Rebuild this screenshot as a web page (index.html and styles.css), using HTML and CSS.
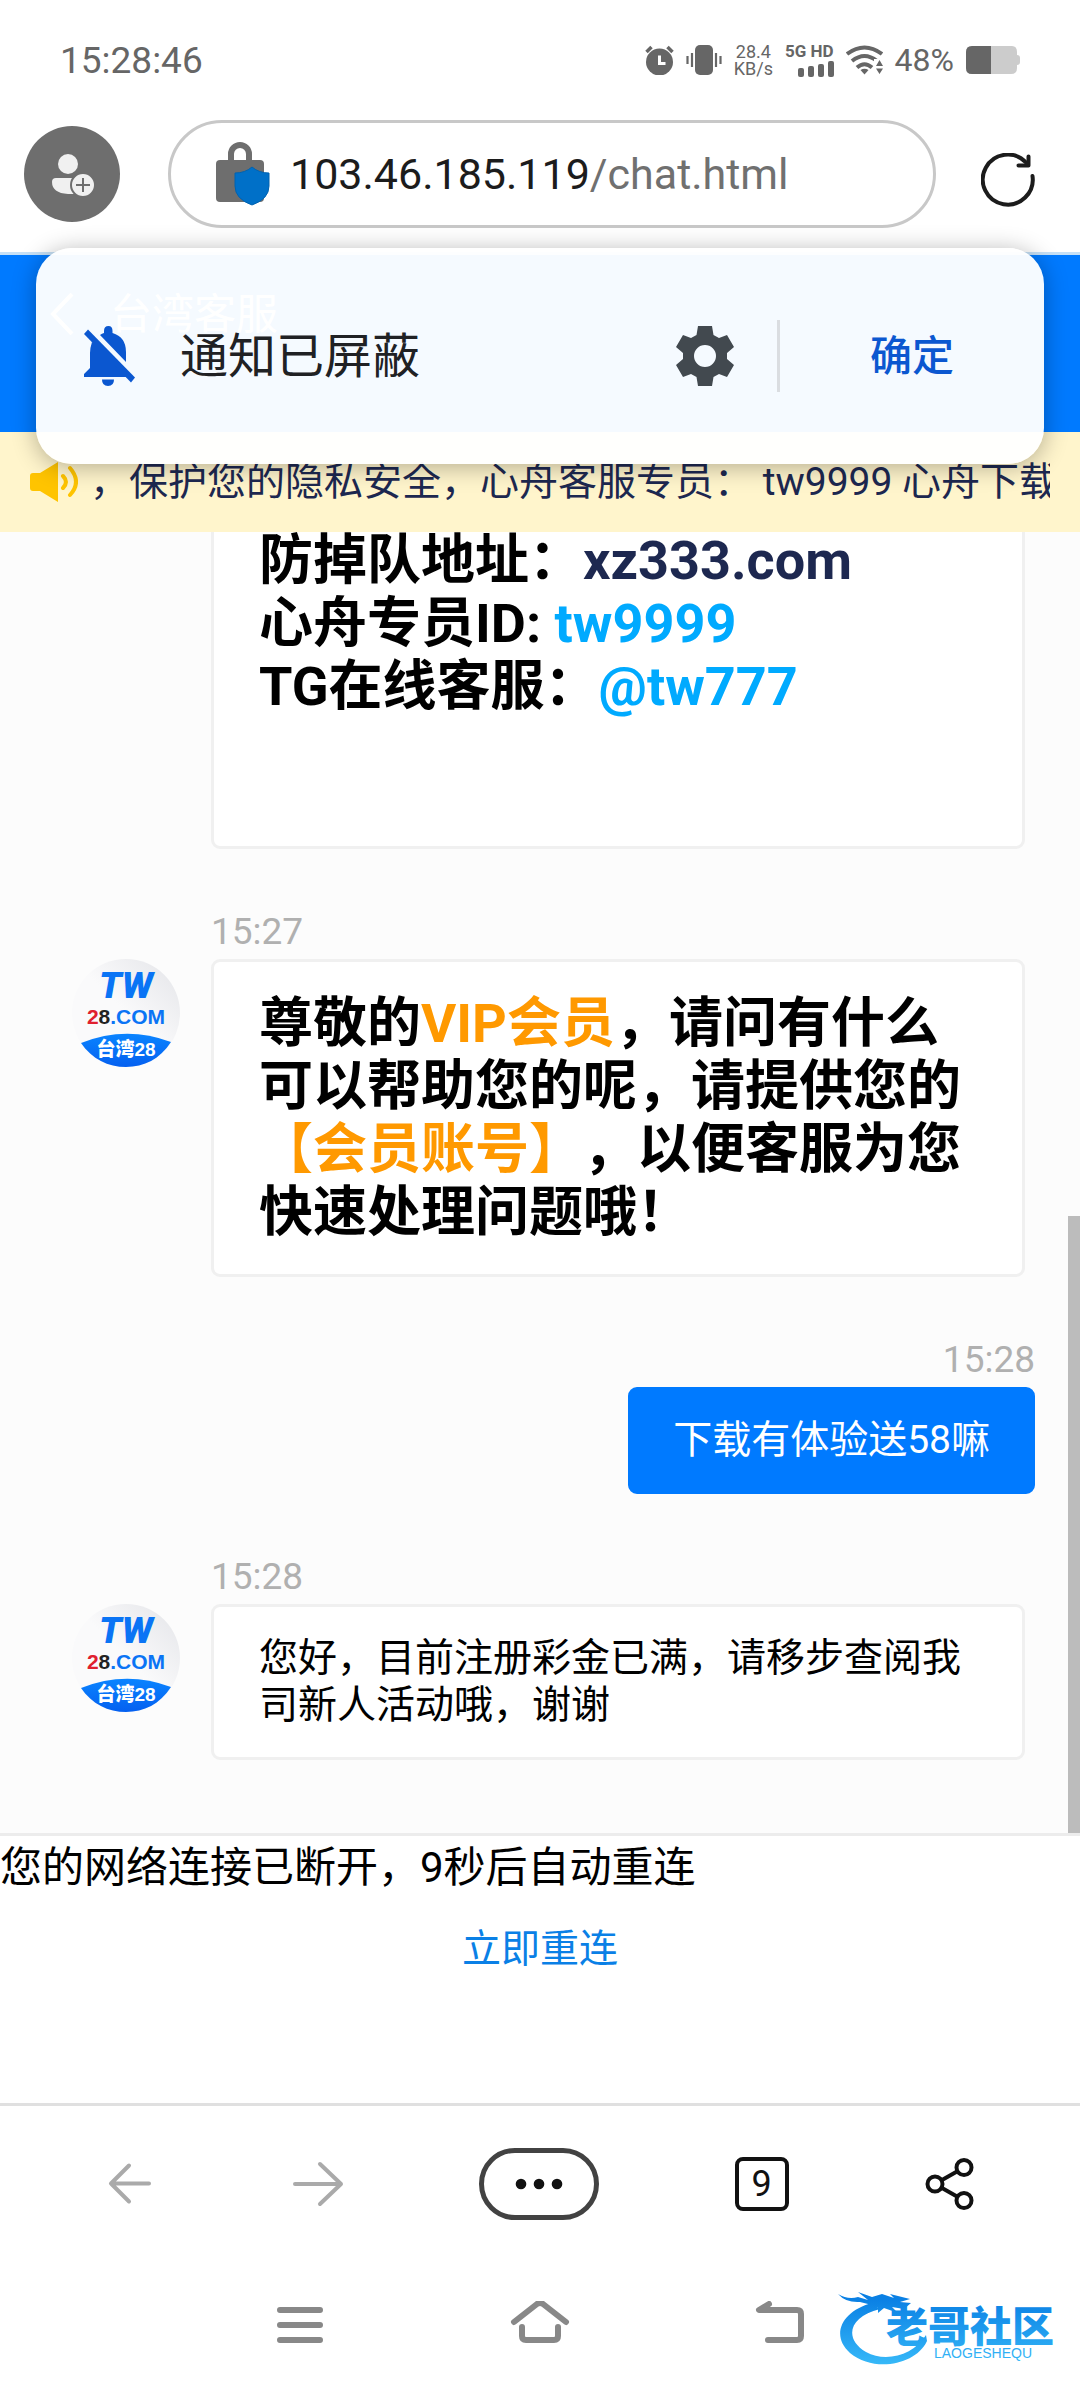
FILE: index.html
```html
<!DOCTYPE html>
<html lang="zh-CN">
<head>
    <meta charset="utf-8">
    <meta name="viewport" content="width=device-width">
    <title>台湾客服</title>
    <link rel="stylesheet" href="styles.css">
</head>
<body>
    <!-- shared logo, used by every service message -->
    <svg class="defs" width="0" height="0" aria-hidden="true">
        <defs>
            <linearGradient id="logo-bg" x1="0" y1="1" x2="1" y2="0">
                <stop offset="0.5" stop-color="#fafafb"/>
                <stop offset="1" stop-color="#e3e4e8"/>
            </linearGradient>
            <linearGradient id="logo-blue" x1="0" y1="0" x2="0" y2="1">
                <stop offset="0" stop-color="#0a84ff"/>
                <stop offset="1" stop-color="#0560f0"/>
            </linearGradient>
            <symbol id="logo" viewBox="0 0 108 108">
                <circle cx="54" cy="54" r="54" fill="url(#logo-bg)"/>
                <path d="M9 84 Q54 66 99 83 C88 100 72 108 54 108 C36 108 20 100 9 84Z" fill="url(#logo-blue)"/>
                <text x="54" y="39" class="logo-tw" text-anchor="middle">TW</text>
                <text x="54" y="65" class="logo-com" text-anchor="middle"><tspan fill="#e0202e">2</tspan><tspan fill="#222">8</tspan>.COM</text>
                <text x="54" y="97" class="logo-name" text-anchor="middle">台湾28</text>
            </symbol>
        </defs>
    </svg>

    <div class="status-bar">
        <span class="clock">15:28:46</span>
        <div class="status-icons">
            <svg width="29" height="30" viewBox="0 0 29 30">
                <circle cx="14.500" cy="17" r="13.500" fill="#666"/>
                <path d="M1.500 7 L6.500 2 M27.500 7 L22.500 2" stroke="#666" stroke-width="3.500"/>
                <path d="M14.500 10.500 V18.500 H20.500" stroke="#fff" stroke-width="3" fill="none"/>
            </svg>
            <svg width="36" height="30" viewBox="0 0 36 30">
                <rect x="9" y="0" width="18" height="30" rx="5" fill="#666"/>
                <path d="M1.500 11 V19 M6 8 V22 M30 8 V22 M34.500 11 V19" stroke="#666" stroke-width="2.200"/>
            </svg>
            <span class="speed">28.4<br>KB/s</span>
            <div class="signal">
                <span>5G HD</span>
                <svg width="36" height="16" viewBox="0 0 36 16" fill="#666">
                    <rect x="0" y="7" width="6" height="9" rx="2"/>
                    <rect x="10" y="5" width="6" height="11" rx="2"/>
                    <rect x="20" y="3" width="6" height="13" rx="2"/>
                    <rect x="30" y="0" width="6" height="16" rx="2"/>
                </svg>
            </div>
            <svg width="37" height="30" viewBox="0 0 37 30" fill="none" stroke="#666" stroke-width="4">
                <path d="M1 9 Q18.500 -4 36 9"/>
                <path d="M6 16 Q18.500 6 31 16"/>
                <path d="M11 22.500 Q18.500 16 26 22.500"/>
                <path d="M14.500 25 Q18.500 22.500 22.500 25 L18.500 29.500Z" fill="#666" stroke="none"/>
                <path d="M28 14 H37 V30 H28Z" fill="#fff" stroke="none"/>
                <path d="M33.500 15 L37 21 H30Z M33.500 29 L30 23.500 H37Z" fill="#666" stroke="none"/>
            </svg>
            <span class="percent">48%</span>
            <svg width="54" height="28" viewBox="0 0 54 28">
                <path d="M6 0 H46 Q51 0 51 6 V9 Q54 9 54 12 V16 Q54 19 51 19 V22 Q51 28 45 28 H6 Q0 28 0 22 V6 Q0 0 6 0Z" fill="#ccc"/>
                <path d="M6 0 H25 V28 H6 Q0 28 0 22 V6 Q0 0 6 0Z" fill="#666"/>
            </svg>
        </div>
    </div>

    <div class="address-row">
        <button class="profile" aria-label="账户">
            <svg width="96" height="96" viewBox="0 0 96 96">
                <circle cx="48" cy="48" r="48" fill="#6e6e6e"/>
                <circle cx="44" cy="38" r="10" fill="#f0f0f0"/>
                <path d="M32 52 H56 V68 H44 Q28 67 28 56 Q28 52 32 52Z" fill="#f0f0f0"/>
                <circle cx="59" cy="59" r="12" fill="#f0f0f0" stroke="#6e6e6e" stroke-width="2"/>
                <path d="M52 59 H66 M59 52 V66" stroke="#6e6e6e" stroke-width="2"/>
            </svg>
        </button>
        <button class="address" aria-label="地址栏">
            <svg width="54" height="64" viewBox="0 0 54 64">
                <path d="M15 20 V12 A9 9 0 0 1 33 12 V20" fill="none" stroke="#6e6e6e" stroke-width="6"/>
                <rect x="0" y="18" width="48" height="42" rx="4" fill="#6e6e6e"/>
                <path d="M36 25 Q43 31 53 31 V44 Q53 57 36 63 Q19 57 19 44 V31 Q29 31 36 25Z" fill="#0070c8" stroke="#0062b0"/>
            </svg>
            <span class="url"><span class="host">103.46.185.119</span>/chat.html</span>
        </button>
        <button class="reload" aria-label="刷新">
            <svg width="54" height="54" viewBox="0 0 54 54" fill="none" stroke="#1c1c1c" stroke-width="4" stroke-linecap="round" stroke-linejoin="round">
                <path d="M51.500 23 A25 25 0 1 1 45 9.500 L47 12"/>
                <path d="M47.500 3.500 V12.500 H37.500"/>
            </svg>
        </button>
    </div>

    <main class="page">
        <div class="popup" role="alertdialog" aria-label="通知已屏蔽">
            <svg width="51" height="60" viewBox="0 0 51 60" fill="#0b57d0">
                <path d="M20 5 Q20 0 24.500 0 Q28.500 0 28.500 5 V7 Q42 11 42 26 V36 L16 9 Q18 7.500 20 7Z"/>
                <path d="M10 17 L43 51 H0 V48 L6 42 V27 Q6 22 8 16Z"/>
                <path d="M18 53.500 H30 Q30 60 24 60 Q18 60 18 53.500Z"/>
                <path d="M4 3.500 L51 51.500 L47 56.500 L0 8Z"/>
            </svg>
            <span class="popup-text">通知已屏蔽</span>
            <button class="gear" aria-label="设置">
                <svg width="58" height="60" viewBox="0 0 58 60">
                    <path fill="#42494f" fill-rule="evenodd" d="M22 0 H36 L37.500 9 L43 12 L51 9 L58 21 L51 27 V33 L58 39 L51 51 L43 48 L37.500 51 L36 60 H22 L20.500 51 L15 48 L7 51 L0 39 L7 33 V27 L0 21 L7 9 L15 12 L20.500 9Z M29 19 A11 11 0 1 0 29 41 A11 11 0 1 0 29 19Z"/>
                </svg>
            </button>
            <button class="confirm">确定</button>
        </div>

        <header class="chat-header">
            <svg width="24" height="42" viewBox="0 0 24 42" fill="none" stroke="#fff" stroke-width="4">
                <path d="M22 1 L3 21 L22 41"/>
            </svg>
            <h1>台湾客服</h1>
        </header>

        <div class="notice">
            <svg width="48" height="40" viewBox="0 0 48 40">
                <path d="M3 11 H10 L28 0 V40 L10 29 H3 Q0 29 0 26 V14 Q0 11 3 11Z" fill="#ffc400"/>
                <path d="M33 14 Q39 20 33 26 M40 6 Q52 20 40 33" fill="none" stroke="#ffc400" stroke-width="4" stroke-linecap="round"/>
            </svg>
            <p class="notice-text">，保护您的隐私安全，心舟客服专员：&nbsp;tw9999 心舟下载</p>
        </div>

        <section class="chat">
            <article class="message">
                <div class="bubble big tail">
                    <p>防掉队地址：<a class="navy" href="#">xz333.com</a></p>
                    <p>心舟专员ID: <span class="sky">tw9999</span></p>
                    <p>TG在线客服：<span class="sky">@tw777</span></p>
                </div>
            </article>

            <article class="message">
                <time>15:27</time>
                <svg class="avatar" role="img" aria-label="台湾28"><use href="#logo"/></svg>
                <div class="bubble big">
                    <p>尊敬的<span class="orange">VIP会员</span>，请问有什么可以帮助您的呢，请提供您的<span class="orange">【会员账号】</span>，以便客服为您快速处理问题哦！</p>
                </div>
            </article>

            <article class="message mine">
                <time>15:28</time>
                <div class="bubble">下载有体验送58嘛</div>
            </article>

            <article class="message">
                <time>15:28</time>
                <svg class="avatar" role="img" aria-label="台湾28"><use href="#logo"/></svg>
                <div class="bubble">您好，目前注册彩金已满，请移步查阅我司新人活动哦，谢谢</div>
            </article>
            <div class="scrollbar"></div>
        </section>

        <footer class="offline">
            <p>您的网络连接已断开，9秒后自动重连</p>
            <a href="#">立即重连</a>
        </footer>
    </main>

    <nav class="toolbar">
        <button aria-label="后退">
            <svg width="52" height="52" viewBox="0 0 52 52" fill="none" stroke="#aaa" stroke-width="4" stroke-linecap="round" stroke-linejoin="round">
                <path d="M45 25.500 H7 M25 7.500 L7 25.500 L25 43.500"/>
            </svg>
        </button>
        <button aria-label="前进">
            <svg width="52" height="52" viewBox="0 0 52 52" fill="none" stroke="#aaa" stroke-width="4" stroke-linecap="round" stroke-linejoin="round">
                <path d="M3 26 H49 M28 6 L49 26 L28 46"/>
            </svg>
        </button>
        <button class="more" aria-label="菜单">
            <svg width="48" height="12" viewBox="0 0 48 12" fill="#111">
                <circle cx="6" cy="6" r="5.300"/><circle cx="24" cy="6" r="5.300"/><circle cx="42" cy="6" r="5.300"/>
            </svg>
        </button>
        <button class="tabs" aria-label="标签页">9</button>
        <button aria-label="分享">
            <svg width="52" height="52" viewBox="0 0 52 52" fill="none" stroke="#111" stroke-width="4">
                <circle cx="11" cy="26" r="7.500"/><circle cx="40" cy="9.500" r="7.500"/><circle cx="40" cy="42.500" r="7.500"/>
                <path d="M18 22 L33 13.500 M18 30 L33 38.500"/>
            </svg>
        </button>
    </nav>

    <nav class="system-nav">
        <button aria-label="最近任务">
            <svg width="60" height="48" viewBox="0 0 60 48" stroke="#888" stroke-width="6" stroke-linecap="round">
                <path d="M10 9 H50 M10 24 H50 M10 39 H50"/>
            </svg>
        </button>
        <button aria-label="主屏幕">
            <svg width="60" height="48" viewBox="0 0 60 48" fill="none" stroke="#888" stroke-width="6" stroke-linecap="round" stroke-linejoin="round">
                <path d="M4 21 L27 3 Q30 1 33 3 L56 21"/>
                <path d="M12 26 V35 Q12 39 16 39 H44 Q48 39 48 35 V26"/>
            </svg>
        </button>
        <button aria-label="返回">
            <svg width="60" height="48" viewBox="0 0 60 48" fill="none" stroke="#888" stroke-width="6" stroke-linecap="round" stroke-linejoin="round">
                <path d="M19 3 L9 9 H47 Q51 9 51 13 V35 Q51 39 47 39 H18"/>
            </svg>
        </button>
        <svg class="watermark" width="228" height="80" viewBox="0 0 228 80">
            <defs>
                <linearGradient id="wm" gradientUnits="userSpaceOnUse" x1="0" y1="10" x2="0" y2="75">
                    <stop offset="0" stop-color="#0a80e4"/>
                    <stop offset="1" stop-color="#36b8f8"/>
                </linearGradient>
            </defs>
            <g fill="url(#wm)">
                <path d="M34 14 C4 22 -8 46 12 64 C36 84 78 76 89 52 L88 46 C76 66 48 74 28 63 C6 50 10 28 42 20Z"/>
                <path d="M0 5 Q10 11 20 8 L30 11 L20 3 L34 8 L44 5 L56 9 L52 5 L72 10 L62 13 L73 14 L66 20 L54 18 L60 24 L46 19 L40 24 L40 18 L28 25 L34 16 L22 13 Q8 14 0 5Z"/>
                <text x="48" y="53" class="wm-name">老哥社区</text>
                <text x="96" y="69" class="wm-sub">LAOGESHEQU</text>
            </g>
        </svg>
    </nav>
</body>
</html>
```
FILE: styles.css
```css
* {
    box-sizing: border-box;
}

body {
    margin: 0;
    height: 100vh;
    display: flex;
    flex-direction: column;
    background: #fff;
    color: #000;
    font-family: Roboto, "Noto Sans CJK SC", sans-serif;
    font-size: 39px;
    line-height: 47px;
    text-spacing-trim: space-all;
}

p, h1 {
    margin: 0;
}

button {
    padding: 0;
    border: 0;
    background: none;
    color: inherit;
    font: inherit;
    cursor: pointer;
}

svg {
    display: block;
    flex: none;
}

a {
    color: #0a80e6;
    text-decoration: none;
}

.defs {
    position: absolute;
}

/* phone status bar */
.status-bar {
    display: flex;
    justify-content: space-between;
    align-items: center;
    height: 120px;
    padding: 0 60px;
    color: #666;
}

.clock {
    font-size: 37px;
}

.status-icons {
    display: flex;
    align-items: center;
    gap: 12px;
}

.speed {
    font-size: 18px;
    line-height: 17px;
    text-align: center;
}

.signal {
    display: flex;
    flex-direction: column;
    align-items: flex-end;
    gap: 3px;
    font-size: 17px;
    font-weight: bold;
    line-height: 14px;
}

.percent {
    font-size: 32px;
}

/* browser address bar */
.address-row {
    display: flex;
    align-items: center;
    height: 108px;
    padding: 0 45px 0 24px;
}

.address {
    flex: 1;
    min-width: 0;
    height: 108px;
    margin: 0 45px 0 48px;
    padding: 0 45px;
    display: flex;
    align-items: center;
    gap: 20px;
    border: 3px solid #c8c8c8;
    border-radius: 54px;
}

.url {
    color: #707070;
    font-size: 43px;
}

.host {
    color: #1c1c1c;
}

.reload {
    padding-top: 12px;
}

/* page content */
.page {
    position: relative;
    flex: 1;
    min-height: 0;
    margin-top: 24px;
    display: flex;
    flex-direction: column;
    border-top: 3px solid #c6e0f6;
}

.popup {
    position: absolute;
    z-index: 2;
    top: -7px;
    left: 36px;
    right: 36px;
    height: 216px;
    padding: 0 48px;
    display: flex;
    align-items: center;
    border-radius: 36px;
    background: rgba(255, 255, 255, 0.96);
    box-shadow: 0 3px 24px rgba(0, 0, 0, 0.3);
}

.popup-text {
    flex: 1;
    margin-left: 45px;
    color: #202124;
    font-size: 48px;
}

.gear {
    margin-right: 43px;
}

.confirm {
    height: 72px;
    width: 219px;
    padding-left: 48px;
    border-left: 3px solid #dadde1;
    color: #0b57d0;
    font-size: 42px;
    font-weight: 500;
}

.chat-header {
    display: flex;
    align-items: center;
    gap: 36px;
    height: 177px;
    padding: 0 50px 59px;
    background: #007aff;
    color: #fff;
}

.chat-header h1 {
    font-size: 42px;
    font-weight: normal;
}

.notice {
    display: flex;
    align-items: center;
    gap: 12px;
    height: 100px;
    padding: 0 30px;
    background: #fff5cc;
    color: #1d2850;
}

.notice-text {
    flex: 1;
    overflow: hidden;
    white-space: nowrap;
}

/* messages stick to the bottom, older ones slide out at the top */
.chat {
    position: relative;
    flex: 1;
    min-height: 0;
    display: flex;
    flex-direction: column;
    justify-content: flex-end;
    gap: 59px;
    padding: 0 55px 73px 72px;
    overflow: hidden;
    background: #fcfcfc;
}

.message {
    flex: none;
    display: grid;
    grid-template-columns: 108px 1fr;
    column-gap: 31px;
}

.message time {
    grid-column: 2;
    margin-bottom: 3px;
    color: #b0b0b0;
    font-size: 37px;
    line-height: 48px;
}

.avatar {
    width: 108px;
    height: 108px;
}

.bubble {
    grid-column: 2;
    padding: 28px 45px;
    border: 3px solid #f0f0f0;
    border-radius: 9px;
    background: #fff;
}

.big {
    padding: 30px 45px;
    font-size: 54px;
    line-height: 63px;
    font-weight: bold;
}

.tail {
    padding-bottom: 128px;
}

.mine {
    display: flex;
    flex-direction: column;
    align-items: flex-end;
    margin-right: -10px;
}

.mine .bubble {
    padding: 27px 42px;
    border-color: #007aff;
    background: #007aff;
    color: #fff;
}

.navy {
    color: #1d2850;
}

.sky {
    color: #00aaff;
}

.orange {
    color: #ff9900;
}

.scrollbar {
    position: absolute;
    right: 0;
    bottom: 0;
    width: 12px;
    height: 617px;
    background: #bcbcbc;
}

.offline {
    display: flex;
    flex-direction: column;
    align-items: center;
    gap: 27px;
    height: 270px;
    border-top: 3px solid #ececec;
}

.offline p {
    align-self: flex-start;
    font-size: 42px;
    line-height: 63px;
}

/* browser toolbar */
.toolbar {
    display: flex;
    justify-content: space-between;
    align-items: center;
    height: 159px;
    padding: 0 104px;
    border-top: 3px solid #e0e0e0;
}

.more {
    display: flex;
    justify-content: center;
    align-items: center;
    width: 120px;
    height: 72px;
    border: 5px solid #424242;
    border-radius: 36px;
}

.tabs {
    width: 54px;
    height: 54px;
    border: 4px solid #111;
    border-radius: 8px;
    color: #111;
    font-size: 36px;
    line-height: 44px;
}

.system-nav {
    position: relative;
    display: flex;
    justify-content: center;
    align-items: center;
    gap: 180px;
    height: 126px;
}

.watermark {
    position: absolute;
    right: 14px;
    bottom: 19px;
}

/* text inside the logos */
.logo-tw {
    fill: #0a74f5;
    font: italic 900 37px Roboto, sans-serif;
}

.logo-com {
    fill: #0a74f5;
    font: bold 21px "Liberation Sans", sans-serif;
}

.logo-name {
    fill: #fff;
    font: 900 19px "Liberation Sans", "Noto Sans CJK SC", sans-serif;
}

.wm-name {
    font: 900 42px "Noto Sans CJK SC", sans-serif;
}

.wm-sub {
    font: 14px "Liberation Sans", sans-serif;
}
```
